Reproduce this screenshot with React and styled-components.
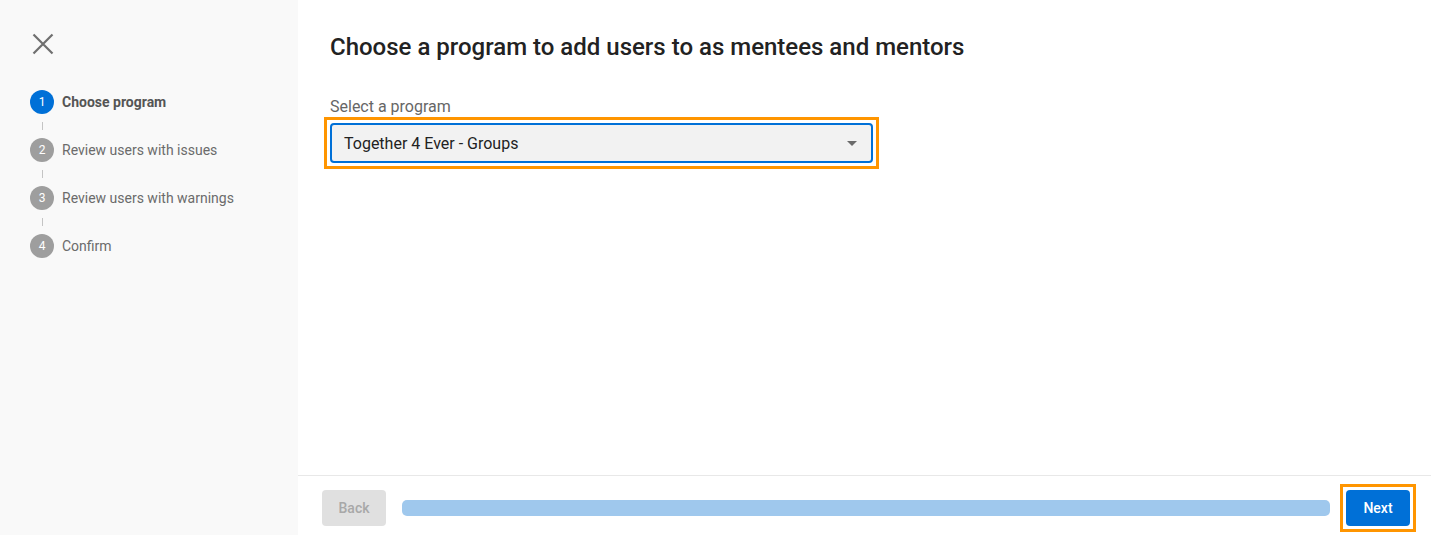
import styled, { createGlobalStyle } from "styled-components";

const steps = [
  "Choose program",
  "Review users with issues",
  "Review users with warnings",
  "Confirm",
];

const GlobalStyle = createGlobalStyle`
  html, body {
    margin: 0;
    padding: 0;
    height: 100%;
  }
  body {
    font-family: Roboto, "Liberation Sans", Arial, sans-serif;
    background: #fff;
  }
`;

const App = () => {
  const active = 0;
  return (
    <Page>
      <GlobalStyle />
      <Sidebar>
        <CloseButton aria-label="Close">
          <svg width="22" height="22" viewBox="0 0 22 22">
            <path
              d="M1.5 1.5 L20.5 20.5 M20.5 1.5 L1.5 20.5"
              stroke="#6f6f6f"
              strokeWidth="2.2"
              fill="none"
            />
          </svg>
        </CloseButton>
        <Steps>
          {steps.map((label, i) => (
            <li key={label}>
              {i > 0 && <Connector />}
              <Step>
                <Dot $active={i === active}>{i + 1}</Dot>
                <StepLabel $active={i === active}>{label}</StepLabel>
              </Step>
            </li>
          ))}
        </Steps>
      </Sidebar>
      <Main>
        <Content>
          <h1>Choose a program to add users to as mentees and mentors</h1>
          <Field>
            <label>Select a program</label>
            <Highlight>
              <Select>
                <span>Together 4 Ever - Groups</span>
                <Caret />
              </Select>
            </Highlight>
          </Field>
        </Content>
        <Footer>
          <Button disabled>Back</Button>
          <Progress />
          <Highlight>
            <Button $primary>Next</Button>
          </Highlight>
        </Footer>
      </Main>
    </Page>
  );
};

const Page = styled.div`
  display: flex;
  height: 100vh;
  width: 100vw;
  overflow: hidden;
`;

const Sidebar = styled.aside`
  width: 298px;
  flex-shrink: 0;
  background: #f9f9f9;
  padding: 33px 0 0 32px;
  box-sizing: border-box;
`;

const CloseButton = styled.button`
  border: none;
  background: none;
  padding: 0;
  display: block;
  width: 22px;
  height: 22px;
  cursor: pointer;
`;

const Steps = styled.ol`
  list-style: none;
  margin: 35px 0 0 -2px;
  padding: 0;
`;

const Step = styled.div`
  display: flex;
  align-items: center;
  gap: 8px;
  height: 24px;
`;

const Connector = styled.div`
  width: 1px;
  height: 8px;
  margin: 8px 0 8px 11.5px;
  background: #c4c4c4;
`;

const Dot = styled.span`
  width: 24px;
  height: 24px;
  border-radius: 50%;
  background: ${(p) => (p.$active ? "#0070d7" : "#9e9e9e")};
  color: #fff;
  font-size: 12px;
  display: flex;
  align-items: center;
  justify-content: center;
`;

const StepLabel = styled.span`
  font-size: 14px;
  color: ${(p) => (p.$active ? "#555" : "#6b6b6b")};
  font-weight: ${(p) => (p.$active ? 700 : 400)};
`;

const Main = styled.main`
  flex: 1;
  display: flex;
  flex-direction: column;
`;

const Content = styled.div`
  flex: 1;
  padding: 32px 32px 0;
  h1 {
    margin: 0;
    font-size: 24px;
    line-height: 30px;
    font-weight: 500;
    color: #222;
  }
`;

const Field = styled.div`
  margin-top: 35px;
  label {
    display: block;
    font-size: 16px;
    line-height: 20px;
    color: #666;
    margin-bottom: 6px;
  }
`;

const Highlight = styled.div`
  display: inline-flex;
  border: 3px solid #ff9500;
  padding: 3px;
  margin: -6px;
  background: #fff;
`;

const Select = styled.div`
  width: 543px;
  height: 40px;
  box-sizing: border-box;
  border: 2px solid #0070d7;
  border-radius: 4px;
  background: #f2f2f2;
  display: flex;
  align-items: center;
  justify-content: space-between;
  padding: 0 14px 0 12px;
  span {
    font-size: 16px;
    color: #222;
  }
`;

const Caret = styled.i`
  width: 0;
  height: 0;
  border-left: 5px solid transparent;
  border-right: 5px solid transparent;
  border-top: 5px solid #6b6b6b;
`;

const Footer = styled.footer`
  height: 60px;
  box-sizing: border-box;
  border-top: 1px solid #e8e8e8;
  display: flex;
  align-items: center;
  gap: 16px;
  padding: 5px 21px 0 24px;
`;

const Button = styled.button`
  width: 64px;
  height: 36px;
  border: none;
  border-radius: 4px;
  font-family: inherit;
  font-size: 14px;
  font-weight: 500;
  background: ${(p) => (p.$primary ? "#0070d7" : "#e0e0e0")};
  color: ${(p) => (p.$primary ? "#fff" : "#a8a8a8")};
`;

const Progress = styled.div`
  flex: 1;
  height: 16px;
  border-radius: 5px;
  background: #9fc8ed;
`;

export default App;
